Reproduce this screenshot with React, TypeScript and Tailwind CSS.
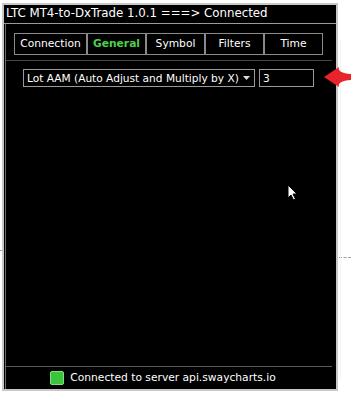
import React from 'react'

const tabs = [
  { name: 'Connection', w: 'w-[73px]' },
  { name: 'General', w: 'w-[59px]', active: true },
  { name: 'Symbol', w: 'w-[59px]' },
  { name: 'Filters', w: 'w-[59px]' },
  { name: 'Time', w: 'w-[59px]' },
]

export default function App() {
  return (
    <div className="relative w-[351px] h-[394px] bg-white overflow-hidden font-['DejaVu_Sans',sans-serif] text-[10.7px] whitespace-nowrap">
      {/* faint background marks */}
      <div className="absolute left-[339px] top-[257px] w-[12px] h-px border-t border-dashed border-gray-400" />
      <div className="absolute left-0 top-[250px] w-[2px] h-px bg-gray-400" />
      <div className="absolute left-[340px] top-[40px] w-px h-[340px] bg-gray-100" />

      {/* window */}
      <div className="absolute left-[2px] top-[3px] w-[336px] h-[388px] border-2 border-[#c8c8c8] bg-black flex flex-col">
        <div className="h-[19px] flex items-center pl-[2px] text-white text-[11.8px] leading-none border-b border-[#9a9a9a]">
          LTC MT4-to-DxTrade 1.0.1 ===&gt; Connected
        </div>
        <div className="flex-1 flex flex-col border-l border-[#6a6a6a] ml-px mr-[4px]">
          <div className="flex pl-[8px] pt-[9px]">
            {tabs.map((t) => (
              <div
                key={t.name}
                className={`${t.w} h-[22px] flex items-center justify-center border border-[#8a8a8a] ${t.active ? 'text-[#4cd14c] font-bold' : 'text-white'}`}
              >
                {t.name}
              </div>
            ))}
          </div>
          <div className="mt-[5px] h-px bg-[#3c4a3c]" />
          <div className="flex gap-[4px] pl-[17px] pt-[8px]">
            <div className="w-[232px] h-[18px] border border-[#9a9a9a] flex items-center justify-between pl-[3px] pr-[4px] text-white text-[10.6px]">
              <span className="leading-none">Lot AAM (Auto Adjust and Multiply by X)</span>
              <svg width="7" height="4" viewBox="0 0 7 4"><path d="M0 0h7L3.5 4z" fill="#ddd" /></svg>
            </div>
            <div className="w-[55px] h-[18px] border border-[#9a9a9a] flex items-center pl-[3px] text-white text-[10.6px] leading-none">3</div>
          </div>
          <div className="flex-1" />
          <div className="h-px bg-[#5a5a5a]" />
          <div className="h-[22px] flex items-center justify-center gap-[6px] text-white pr-[12px]">
            <div className="w-[14px] h-[14px] rounded-[2px] bg-[#3cc43c] border border-[#7fe07f]" />
            <span className="leading-none">Connected to server api.swaycharts.io</span>
          </div>
        </div>
      </div>

      {/* red arrow */}
      <svg className="absolute left-[324px] top-[67px]" width="27" height="20" viewBox="0 0 27 20">
        <path d="M0 10 L15 0 Q13 6 27 7 L27 13 Q13 14 15 20 Z" fill="#e8232a" />
      </svg>

      {/* mouse cursor */}
      <svg className="absolute left-[287px] top-[184px]" width="12" height="18" viewBox="0 0 12 18">
        <path d="M1 1 L1 14 L4 11 L6.5 16 L8.5 15 L6 10 L10 10 Z" fill="#fff" stroke="#000" strokeWidth="1" />
      </svg>
    </div>
  )
}
